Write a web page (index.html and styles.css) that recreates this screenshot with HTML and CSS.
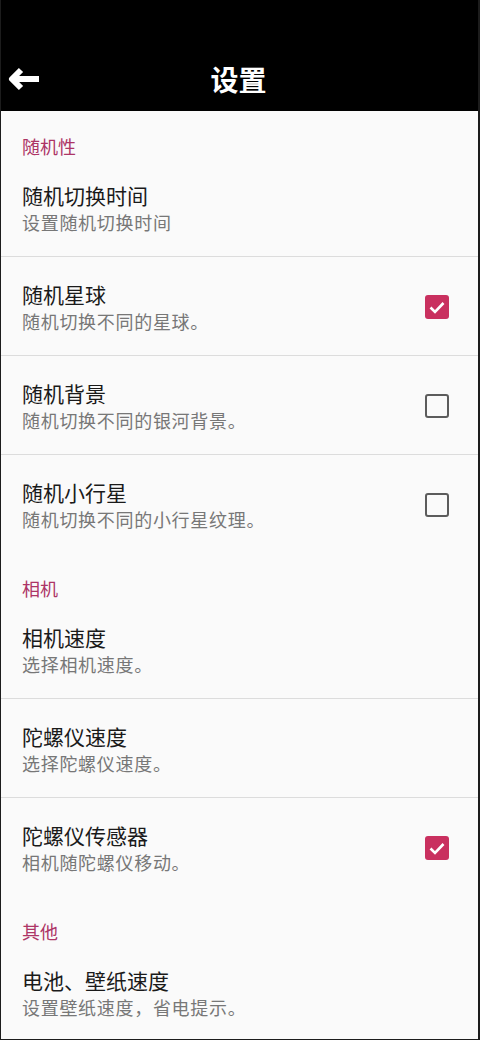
FILE: index.html
```html
<!DOCTYPE html>
<html lang="zh-CN">
<head>
  <meta charset="UTF-8">
  <meta name="viewport" content="width=device-width, initial-scale=1.0">
  <title>设置</title>
  <link rel="stylesheet" href="styles.css">
</head>
<body>

  <div class="screen">
    <header class="app-bar">
      <div class="toolbar">
        <button class="back" aria-label="返回">
          <svg width="34" height="26" viewBox="0 0 34 26">
            <path d="M33 13H8" fill="none" stroke="#fff" stroke-width="6"/>
            <path d="M15 4L6 13L15 22" fill="none" stroke="#fff" stroke-width="6" stroke-linejoin="round"/>
          </svg>
        </button>
        <h1>设置</h1>
        <span></span>
      </div>
    </header>

    <main class="prefs">
      <div class="category">随机性</div>
      <div class="item">
        <div class="text">
          <div class="title">随机切换时间</div>
          <div class="summary">设置随机切换时间</div>
        </div>
      </div>
      <div class="item">
        <div class="text">
          <div class="title">随机星球</div>
          <div class="summary">随机切换不同的星球。</div>
        </div>
        <span class="check checked">
          <svg width="24" height="24" viewBox="0 0 24 24"><path d="M5.5 12.5L10 17L18.5 8" fill="none" stroke="#fff" stroke-width="2.6"/></svg>
        </span>
      </div>
      <div class="item">
        <div class="text">
          <div class="title">随机背景</div>
          <div class="summary">随机切换不同的银河背景。</div>
        </div>
        <span class="check"></span>
      </div>
      <div class="item">
        <div class="text">
          <div class="title">随机小行星</div>
          <div class="summary">随机切换不同的小行星纹理。</div>
        </div>
        <span class="check"></span>
      </div>

      <div class="category">相机</div>
      <div class="item">
        <div class="text">
          <div class="title">相机速度</div>
          <div class="summary">选择相机速度。</div>
        </div>
      </div>
      <div class="item">
        <div class="text">
          <div class="title">陀螺仪速度</div>
          <div class="summary">选择陀螺仪速度。</div>
        </div>
      </div>
      <div class="item">
        <div class="text">
          <div class="title">陀螺仪传感器</div>
          <div class="summary">相机随陀螺仪移动。</div>
        </div>
        <span class="check checked">
          <svg width="24" height="24" viewBox="0 0 24 24"><path d="M5.5 12.5L10 17L18.5 8" fill="none" stroke="#fff" stroke-width="2.6"/></svg>
        </span>
      </div>

      <div class="category">其他</div>
      <div class="item">
        <div class="text">
          <div class="title">电池、壁纸速度</div>
          <div class="summary">设置壁纸速度，省电提示。</div>
        </div>
      </div>
    </main>
  </div>

</body>
</html>
```

FILE: styles.css
```css
body {
  margin: 0;
  font-family: "Noto Sans CJK SC", "Noto Sans", sans-serif;
  background-color: #1c1c1c;
}
.screen {
  height: 1040px;
  box-sizing: border-box;
  overflow: hidden;
  background: #fafafa;
  border-left: 1px solid #1c1c1c;
  border-right: 2px solid #1c1c1c;
  border-bottom: 1px solid #1c1c1c;
}
.app-bar {
  background: #000;
  height: 111px;
  padding-top: 47px;
  box-sizing: border-box;
}
.toolbar {
  height: 64px;
  display: grid;
  grid-template-columns: 1fr auto 1fr;
  align-items: center;
}
.back {
  justify-self: start;
  background: none;
  border: none;
  padding: 0;
  margin-left: 5px;
  display: flex;
}
.toolbar h1 {
  margin: 0;
  color: #fff;
  font-size: 28px;
  font-weight: 700;
  line-height: 34px;
  position: relative;
  left: -1px;
}
.category {
  padding: 25px 21px 2px;
  line-height: 20px;
  font-size: 18px;
  color: #ad3566;
}
.item {
  display: flex;
  align-items: center;
  padding: 24px 29px 20px 21px;
}
.item + .item {
  border-top: 1px solid #dcdcdc;
}
.text {
  flex: 1;
}
.title {
  font-size: 21px;
  line-height: 26px;
  color: #1a1a1a;
}
.summary {
  font-size: 18px;
  letter-spacing: 0.7px;
  line-height: 28px;
  color: #777;
}
.check {
  width: 24px;
  height: 24px;
  box-sizing: border-box;
  border: 2.5px solid #5c5c5c;
  border-radius: 3px;
  margin-top: -3px;
}
.check.checked {
  border: none;
  background: #c9305f;
  display: flex;
}
```
